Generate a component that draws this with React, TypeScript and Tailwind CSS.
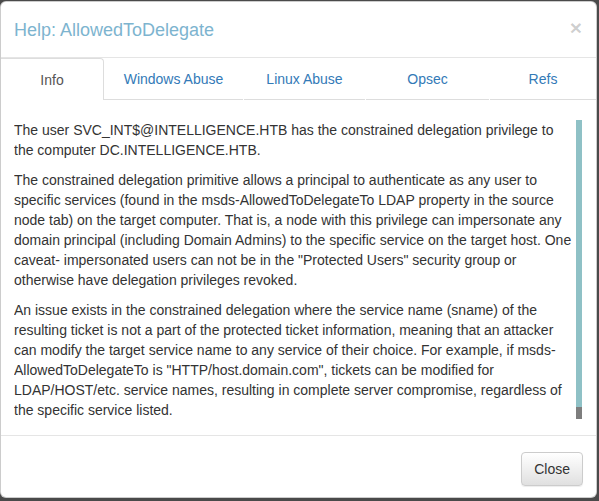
const tabs = [
  { label: "Info", width: "w-[103px]" },
  { label: "Windows Abuse", width: "w-[139px]" },
  { label: "Linux Abuse", width: "w-[121px]" },
  { label: "Opsec", width: "w-[123px]" },
  { label: "Refs", width: "flex-1" },
];

export default function App() {
  return (
    <div
      className="h-[501px] w-[599px] overflow-hidden bg-[#4a4a4a] pt-px"
      style={{ fontFamily: '"Liberation Sans", Arial, sans-serif' }}
    >
      <div className="flex h-[497px] w-[597px] flex-col overflow-hidden rounded-[6px] border border-black/20 bg-white text-[14px] leading-[20px] text-[#333]">
        {/* header */}
        <div className="flex h-[56px] shrink-0 items-center justify-between border-b border-[#e5e5e5] pl-[13px] pr-[14px]">
          <h4 className="text-[18px] leading-[26px] text-[#7db4cf]">Help: AllowedToDelegate</h4>
          <button className="-mt-[4px] text-[21px] font-bold leading-none text-black/20">×</button>
        </div>

        {/* tabs */}
        <div className="flex h-[42px] shrink-0">
          {tabs.map((t, i) =>
            i === 0 ? (
              <div
                key={t.label}
                className={`${t.width} flex items-center justify-center rounded-tr-[4px] border-r border-t border-[#ddd] text-[#555]`}
              >
                {t.label}
              </div>
            ) : (
              <div
                key={t.label}
                className={`${t.width} flex items-center justify-center border-b border-[#ddd] text-[#337ab7] ${i > 1 ? "ml-px" : ""}`}
              >
                {t.label}
              </div>
            )
          )}
        </div>

        {/* body */}
        <div className="flex h-[335px] shrink-0 pl-[13px] pt-[20px]">
          <div className="h-[300px] w-[558px] overflow-hidden">
            <p className="mb-[10px]">
              The user SVC_INT$@INTELLIGENCE.HTB has the constrained delegation privilege to the computer
              DC.INTELLIGENCE.HTB.
            </p>
            <p className="mb-[10px]">
              The constrained delegation primitive allows a principal to authenticate as any user to specific
              services (found in the msds-AllowedToDelegateTo LDAP property in the source node tab) on the target
              computer. That is, a node with this privilege can impersonate any domain principal (including Domain
              Admins) to the specific service on the target host. One caveat- impersonated users can not be in the
              "Protected Users" security group or otherwise have delegation privileges revoked.
            </p>
            <p className="mb-[10px]">
              An issue exists in the constrained delegation where the service name (sname) of the resulting ticket
              is not a part of the protected ticket information, meaning that an attacker can modify the target
              service name to any service of their choice. For example, if msds-AllowedToDelegateTo is
              "HTTP/host.domain.com", tickets can be modified for LDAP/HOST/etc. service names, resulting in
              complete server compromise, regardless of the specific service listed.
            </p>
          </div>
          <div className="ml-[4px] flex h-[299px] w-[6px] flex-col bg-gradient-to-b from-[#9a9a9a] to-[#7d7d7d]">
            <div className="h-[287px] bg-[#8fc1c6]" />
          </div>
        </div>

        {/* footer */}
        <div className="flex flex-1 items-start justify-end border-t border-[#e5e5e5] pr-[13px] pt-[16px]">
          <button className="h-[34px] rounded-[4px] border border-[#ccc] bg-gradient-to-b from-white to-[#e0e0e0] px-[12px] text-[14px] text-[#333] shadow-[inset_0_1px_0_rgba(255,255,255,.15),0_1px_1px_rgba(0,0,0,.075)]">
            Close
          </button>
        </div>
      </div>
    </div>
  );
}
